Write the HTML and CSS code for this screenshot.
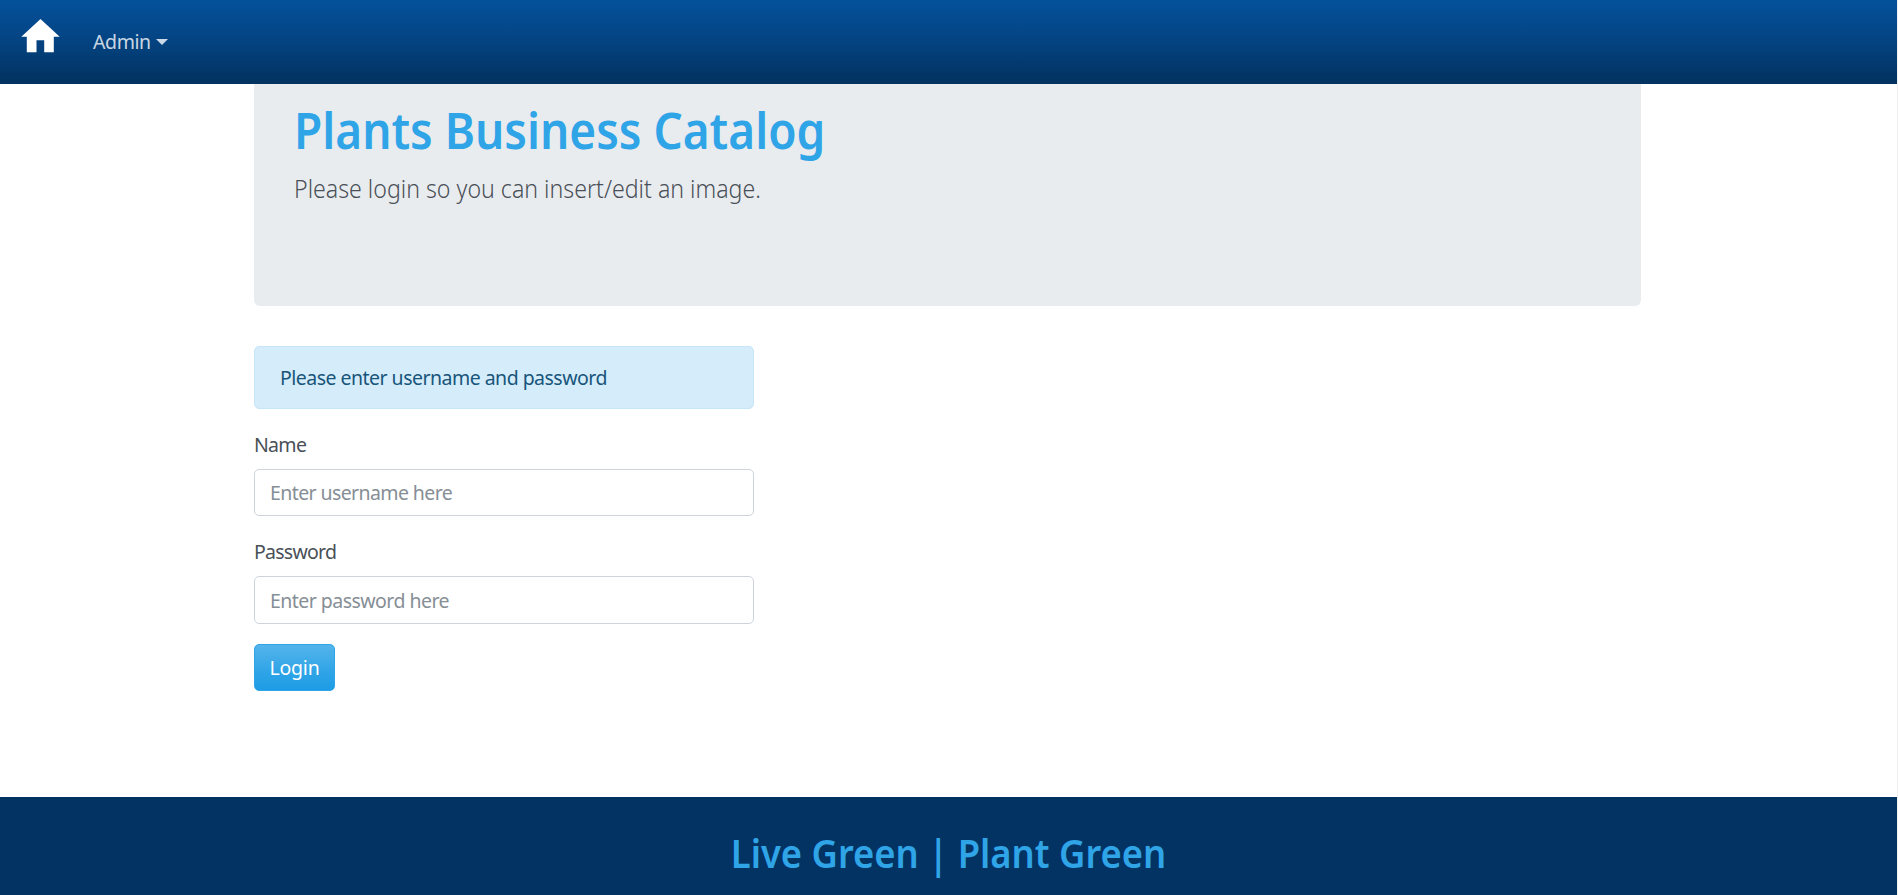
FILE: index.html
```html
<!DOCTYPE html>
<html lang="en">
<head>
<meta charset="utf-8">
<title>Plants Business Catalog</title>
<link rel="stylesheet" href="styles.css">
</head>
<body>
<div class="page">
  <nav class="navbar">
    <a class="brand" aria-label="Home"><svg class="home" width="40" height="34" viewBox="0 0 40 34"><path fill="#fff" d="M19.5 0 38.7 17.7H32.8V33.2H23.2V21.2H15.5V33.2H5.8V17.7H.3z"/></svg></a>
    <a class="nav-link"><span class="nav-text">Admin</span><span class="caret"></span></a>
  </nav>
  <main class="container">
    <header class="jumbotron">
      <h1 class="title"><span class="title-text">Plants Business Catalog</span></h1>
      <p class="lead"><span class="lead-text">Please login so you can insert/edit an image.</span></p>
    </header>
    <form class="form">
      <div class="alert"><span class="alert-text">Please enter username and password</span></div>
      <div class="group">
        <label class="label label-name" for="name">Name</label>
        <input class="input" id="name" type="text" placeholder="Enter username here">
      </div>
      <div class="group">
        <label class="label label-password" for="password">Password</label>
        <input class="input input-password" id="password" type="password" placeholder="Enter password here">
      </div>
      <button class="button" type="button">Login</button>
    </form>
  </main>
  <footer class="footer"><h2 class="slogan"><span class="slogan-text">Live Green | Plant Green</span></h2></footer>
</div>
</body>
</html>
```
FILE: styles.css
```css
* { box-sizing: border-box; }
body {
  margin: 0;
  font: 400 19.5px/30px "Noto Sans", sans-serif;
  letter-spacing: -.52px;
  color: #495057;
  background: #fff;
}
.page {
  display: flex;
  flex-direction: column;
  height: 895px;
  overflow: hidden;
  border-right: 1px solid #f0f0f0;
}
.navbar {
  flex: none;
  display: flex;
  align-items: flex-start;
  height: 84px;
  padding: 19px 20px 0 21px;
  background: linear-gradient(#04519b, #044687 40%, #02325f);
}
.home { display: block; }
.nav-link {
  display: flex;
  align-items: center;
  gap: 6px;
  margin: 8px 0 0 32px;
  color: rgba(255, 255, 255, .8);
}
.nav-text { letter-spacing: -.4px; }
.caret {
  margin-top: -1px;
  margin-left: -1px;
  border: 6px solid transparent;
  border-top-color: currentColor;
  border-bottom: 0;
}
.container {
  flex: none;
  width: 1387px;
  height: 713px;
  margin-left: 254px;
}
.jumbotron {
  height: 222px;
  padding: 16px 40px 0;
  border-radius: 0 0 6px 6px;
  background: #e9ecef;
}
.title {
  margin: 0;
  font-size: 50px;
  line-height: 60px;
  font-weight: 600;
  color: #2fa4e7;
  letter-spacing: 0;
}
.title-text {
  display: inline-block;
  transform: scaleX(.919);
  transform-origin: left;
}
.lead {
  margin: 9px 0 0;
  font-size: 25px;
  line-height: 38px;
  font-weight: 300;
  letter-spacing: 0;
}
.lead-text {
  display: inline-block;
  transform: scaleX(.926);
  transform-origin: left;
}
.form {
  width: 500px;
  padding-top: 40px;
}
.alert {
  height: 63px;
  margin-bottom: 20px;
  padding: 16px 25px;
  border: 1px solid #c5e6f8;
  border-radius: 5px;
  background: #d5edfa;
  color: #18557a;
}
.group { margin-bottom: 20px; }
.label {
  display: block;
  width: max-content;
  padding-top: 1px;
  margin-bottom: 9px;
}
.label-name { letter-spacing: -.7px; }
.label-password { letter-spacing: -.75px; }
.input {
  display: block;
  width: 500px;
  height: 47px;
  padding: 0 15px;
  border: 1px solid #ced4da;
  border-radius: 5px;
  font: inherit;
  letter-spacing: -.6px;
  color: #495057;
}
.input-password {
  height: 48px;
  letter-spacing: -.54px;
}
.input::placeholder { color: #868e96; opacity: 1; }
.button {
  display: block;
  width: 81px;
  height: 47px;
  padding: 0;
  border: 1px solid #2fa4e7;
  border-radius: 5px;
  background: linear-gradient(#54b4eb, #2fa4e7 60%, #1d9ce5);
  font: inherit;
  letter-spacing: -.2px;
  color: #fff;
}
.footer {
  flex: 1;
  padding-top: 32px;
  background: #033363;
  text-align: center;
}
.slogan {
  margin: 0;
  font-size: 40px;
  line-height: 48px;
  font-weight: 600;
  letter-spacing: 0;
  color: #2fa4e7;
}
.slogan-text {
  display: inline-block;
  transform: scaleX(.909);
}
```
